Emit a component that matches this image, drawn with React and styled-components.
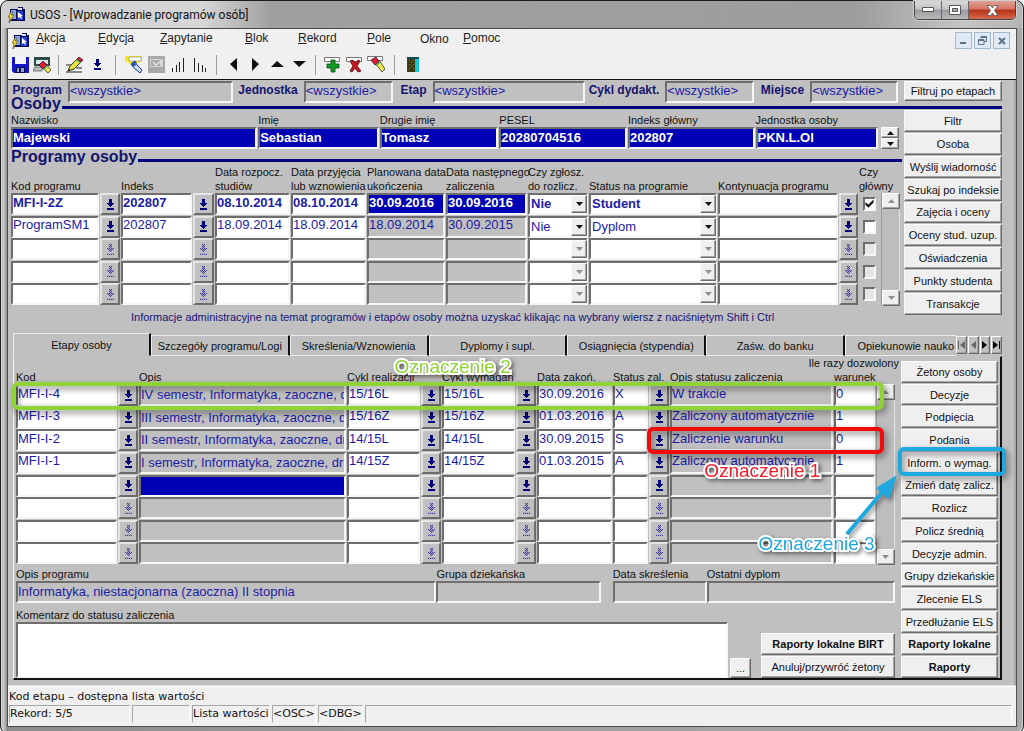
import React from "react";
import styled, { createGlobalStyle, css } from "styled-components";

const GlobalStyle = createGlobalStyle`
  * { box-sizing: border-box; }
  body {
    margin: 0;
    background: #fff;
    font-family: "Liberation Sans", Arial, sans-serif;
    font-size: 11px;
    color: #111;
  }
  button, input, select, textarea { font: inherit; color: inherit; border-radius: 0; }
  svg { display: block; flex: none; }
`;

const raised = css`
  border: 1px solid;
  border-color: #fbfbfb #6c6c6c #6c6c6c #fbfbfb;
  box-shadow: inset -1px -1px 0 #a4a4a4;
`;

const inset = css`
  border: 2px solid;
  border-color: #6e6e6e #f6f6f6 #f6f6f6 #6e6e6e;
`;

/* ---------- window frame ---------- */

const Window = styled.div`
  display: flex;
  flex-direction: column;
  min-height: 100vh;
  padding: 0 6px 6px;
  border: 1px solid #1c1c1c;
  border-radius: 8px;
  background: linear-gradient(to right, #8a8a8a 0, #d0d0d0 2px, #8d8d8d 6px, #9f9f9f 50%, #a8a8a8 100%);
  box-shadow: inset 1px 1px 0 #dcdcdc, inset -1px -1px 0 #d0d0d0;
`;

const TitleBar = styled.header`
  display: flex;
  align-items: center;
  height: 27px;
  margin: 0 -5px;
  padding: 0 6px 0 6px;
  gap: 5px;
  border-radius: 7px 7px 0 0;
  background: linear-gradient(to right, #cfcfcf 0, #d6d6d6 200px, #9f9f9f 270px, #9d9d9d 84%, #c4c4c4 94%, #b4b4b4 100%);
`;

const TitleText = styled.h1`
  flex: 1;
  margin: 0;
  font: 400 12px Roboto, "Open Sans", sans-serif;
`;

const Caption = styled.div`
  display: flex;
  align-self: flex-start;
  border: 1px solid #444;
  border-top: 0;
  border-radius: 0 0 5px 5px;
  overflow: hidden;
  box-shadow: 0 0 0 1px #cfcfcf;
`;

const CaptionButton = styled.button`
  display: flex;
  align-items: center;
  justify-content: center;
  width: ${(p) => (p.$close ? "46px" : "27px")};
  height: 18px;
  padding: 0;
  border: 0;
  border-right: ${(p) => (p.$close ? "0" : "1px solid #666")};
  background: ${(p) =>
    p.$close
      ? "linear-gradient(#e0a196 0, #d67462 45%, #b9301a 50%, #d56a4b 100%)"
      : "linear-gradient(#d8d8d8 0, #c4c4c6 45%, #9c9ca0 50%, #b9b9bc 100%)"};
`;

const Content = styled.div`
  flex: 1;
  display: flex;
  flex-direction: column;
  border: 1px solid #4c4c4c;
  background: #f0f0f0;
`;

const MenuBar = styled.nav`
  display: flex;
  align-items: center;
  height: 23px;
  padding: 0 6px 0 4px;
  font-size: 12px;
`;

const MenuItem = styled.a`
  width: ${(p) => p.$width}px;
  margin-bottom: ${(p) => (p.$plain ? 4 : 6)}px;
  color: #222;
  text-decoration: none;
  white-space: nowrap;
`;

const MenuIcon = styled.span`
  width: 24px;
`;

const ChildButtons = styled.div`
  display: flex;
  gap: 2px;
  margin-left: auto;
`;

const ChildButton = styled.button`
  display: flex;
  align-items: center;
  justify-content: center;
  width: 17px;
  height: 17px;
  padding: 0;
  border: 1px solid #a3b9cc;
  background: #dfeaf5;
`;

const Toolbar = styled.div`
  display: flex;
  align-items: center;
  height: 28px;
  padding: 0 1px 2px;
  border-bottom: 1px solid #111;
`;

const ToolButton = styled.button`
  display: flex;
  align-items: center;
  justify-content: center;
  width: 22px;
  height: 22px;
  padding: 0;
  border: 0;
  background: transparent;
`;

const Separator = styled.span`
  width: 1px;
  height: 20px;
  margin: 0 ${(p) => p.$gap || 5}px;
  background: #9a9a9a;
`;

/* ---------- form ---------- */

const Form = styled.main`
  flex: 1;
  padding: 1px 12px 5px 3px;
  background: #c0c0c0;
  border-right: 2px solid #a9a9a9;
  border-bottom: 1px solid #dedede;
`;

const FilterBar = styled.div`
  display: grid;
  grid-template-columns: 57fr 165fr 71fr 89fr 40fr 153fr 80fr 89fr 56fr 88fr 6fr 98fr;
  align-items: start;
`;

const FilterLabel = styled.label`
  padding: 2px 6px 0 0;
  font-size: 12px;
  font-weight: bold;
  line-height: 14px;
  text-align: right;
  white-space: nowrap;
  color: #14146e;
`;

const Field = styled.input`
  display: block;
  width: 100%;
  min-width: 0;
  height: 22px;
  padding: 0 0 ${(p) => (p.$center ? "1px" : "4px")};
  font-size: 13px;
  font-weight: ${(p) => (p.$bold ? "bold" : "normal")};
  ${inset}
  background: ${(p) => (p.$selected ? "#0000b4" : p.$gray ? "#c0c0c0" : "#fff")};
  color: ${(p) => (p.$selected ? "#fff" : "#1c1ca6")};
  outline: 0;
`;

const SideButton = styled.button`
  min-height: 20px;
  min-width: 0;
  padding: 0;
  font-size: 11px;
  font-weight: ${(p) => (p.$bold ? "bold" : "normal")};
  white-space: nowrap;
  background: #efefef;
  ${raised}
`;

const Heading = styled.h2`
  display: flex;
  align-items: flex-end;
  margin: ${(p) => (p.$tight ? "-8px 0 -3px" : "0")};
  font-size: 16px;
  line-height: ${(p) => (p.$tight ? "18px" : "16px")};
  color: #14146e;
  &::after {
    content: "";
    flex: 1;
    height: 3px;
    margin: 0 0 ${(p) => (p.$tight ? 4 : 3)}px 1px;
    background: #04047c;
  }
`;

const Columns = styled.div`
  display: grid;
  grid-template-columns: minmax(0, 892fr) minmax(0, 98fr);
  gap: 2px;
`;

const SideBar = styled.aside`
  display: grid;
  grid-auto-rows: 1fr;
  gap: 1px;
  align-self: start;
  height: ${(p) => p.$height}px;
  margin-top: ${(p) => p.$top || 0}px;
`;

const PersonRow = styled.div`
  display: grid;
  grid-template-columns: 247fr 121fr 119fr 128fr 127fr 123fr 21px;
  column-gap: 1px;
  align-items: end;
  padding: 3px 2px 0 0;
`;

const Labeled = styled.label`
  display: block;
  min-width: 0;
  line-height: 14px;
  white-space: nowrap;
`;

const Spinner = styled.div`
  display: flex;
  flex-direction: column;
  padding-left: 2px;
`;

const TinyButton = styled.button`
  display: flex;
  align-items: center;
  justify-content: center;
  width: ${(p) => p.$width || 18}px;
  height: ${(p) => p.$height || 16}px;
  padding: 0;
  background: ${(p) => (p.$gray ? "#c0c0c0" : "#efefef")};
  ${raised}
`;

const TableArea = styled.div`
  display: grid;
  grid-template-columns: minmax(0, 1fr) 19px;
  align-items: end;
  column-gap: 1px;
  padding-right: ${(p) => p.$right}px;
`;

const Table = styled.table`
  width: 100%;
  table-layout: fixed;
  border-collapse: collapse;
  height: ${(p) => p.$height}px;
  th {
    height: ${(p) => p.$head}px;
    padding: 0;
    font-weight: normal;
    line-height: 14px;
    text-align: left;
    vertical-align: bottom;
    white-space: pre;
  }
  td {
    height: 22px;
    padding: 0 1px 0 0;
    vertical-align: top;
  }
`;

const ScrollBar = styled.div`
  display: flex;
  flex-direction: column;
  justify-content: space-between;
  height: ${(p) => p.$height}px;
  border-left: 1px solid #999;
  border-right: 1px solid #e4e4e4;
  background: #bdbdbd;
`;

const PickButton = styled.button`
  display: flex;
  align-items: center;
  justify-content: center;
  width: 100%;
  height: 22px;
  padding: 0;
  border: 2px solid;
  border-color: #e4e4e4 #6c6c6c #6c6c6c #e4e4e4;
  background: #c0c0c0;
`;

const SelectBox = styled.div`
  display: grid;
  & > * { grid-area: 1 / 1; }
`;

const Select = styled.select`
  appearance: none;
  width: 100%;
  height: 22px;
  padding: 0 18px 1px 1px;
  font-size: 13px;
  font-weight: ${(p) => (p.$bold ? "bold" : "normal")};
  color: #1c1ca6;
  background: #fff;
  opacity: 1;
  ${inset}
`;

const SelectArrow = styled.span`
  display: flex;
  align-items: center;
  justify-content: center;
  justify-self: end;
  width: 16px;
  height: 18px;
  margin: 2px 1px 0 0;
  pointer-events: none;
  background: #efefef;
  ${raised}
`;

const Check = styled.input`
  appearance: none;
  display: block;
  width: 13px;
  height: 14px;
  margin: 4px 0 0 4px;
  ${inset}
  background: ${(p) => (p.disabled ? "#e6e6e6" : "#fff")};
  &:checked::after {
    content: "";
    display: block;
    width: 9px;
    height: 9px;
    background: #111;
    clip-path: polygon(5% 35%, 38% 62%, 95% 5%, 95% 38%, 38% 98%, 5% 68%);
  }
`;

const Info = styled.p`
  margin: 0;
  padding: 4px 8px 9px 0;
  font-size: 11px;
  line-height: 14px;
  text-align: center;
  color: #14147a;
`;

/* ---------- tabs ---------- */

const Tabs = styled.div`
  display: grid;
  grid-template-columns: 138fr repeat(5, 139fr) 111fr 46px;
  align-items: end;
  margin-left: 2px;
`;

const Tab = styled.button`
  height: ${(p) => (p.$active ? "23px" : "21px")};
  min-width: 0;
  padding: 0 2px;
  overflow: hidden;
  white-space: nowrap;
  text-align: ${(p) => (p.$cut ? "right" : "center")};
  background: #c0c0c0;
  border: 1px solid #ececec;
  border-right: ${(p) => (p.$cut ? "0" : "2px solid #111")};
  border-bottom-color: ${(p) => (p.$active ? "#c0c0c0" : "#ececec")};
`;

const TabNav = styled.div`
  display: flex;
  gap: 1px;
  padding-bottom: 2px;
`;

const Panel = styled.section`
  position: relative;
  margin-left: 2px;
  padding: 0 2px;
  border: 1px solid;
  border-color: #c0c0c0 #111 #111 #f4f4f4;
  border-right-width: 2px;
  border-bottom-width: 2px;
`;

const Note = styled.div`
  line-height: 13px;
  text-align: right;
`;

const Details = styled.div`
  display: grid;
  grid-template-columns: 420fr 164fr 12fr 94fr 188fr;
  padding: 2px 4px 0 0;
`;

const CommentRow = styled.div`
  display: grid;
  grid-template-columns: minmax(0, 1fr) 21px 142px;
  column-gap: 2px;
  align-items: end;
  padding: 5px 4px 0 0;
`;

const Comment = styled.textarea`
  display: block;
  width: 100%;
  height: 56px;
  resize: none;
  ${inset}
`;

const ReportButtons = styled.div`
  display: grid;
  grid-auto-rows: 22px;
  gap: 1px;
  margin-left: 8px;
`;

/* ---------- status bar ---------- */

const StatusBar = styled.footer`
  padding: 2px 4px 3px 1px;
  border-top: 1px solid #fff;
  font: 11px/16px "DejaVu Sans", "Open Sans", sans-serif;
  white-space: nowrap;
`;

const StatusCells = styled.div`
  display: flex;
  gap: 2px;
`;

const StatusCell = styled.span`
  flex: ${(p) => (p.$width ? `0 0 ${p.$width}px` : "1")};
  height: 18px;
  line-height: 16px;
  border: 1px solid;
  border-color: #a6a6a6 #fff #f0f0f0 #a6a6a6;
`;

/* ---------- annotations lying over the form ---------- */

const Frame = styled.div`
  position: absolute;
  pointer-events: none;
  border: 4px solid ${(p) => p.$color};
  border-radius: 6px;
  filter: drop-shadow(2px 3px 3px rgba(0, 0, 0, 0.5));
  top: ${(p) => p.$top}px;
  right: ${(p) => p.$right}px;
  left: ${(p) => p.$left};
  width: ${(p) => p.$width};
  height: ${(p) => p.$height}px;
`;

const Mark = styled.div`
  position: absolute;
  pointer-events: none;
  top: ${(p) => p.$top}px;
  left: ${(p) => p.$left};
  font-size: 19px;
  line-height: 22px;
  white-space: nowrap;
  color: ${(p) => p.$color};
  -webkit-text-stroke: 4px #fff;
  paint-order: stroke fill;
  filter: drop-shadow(2px 2px 2px rgba(0, 0, 0, 0.5));
`;

const Pointer = styled.svg`
  position: absolute;
  pointer-events: none;
  top: 117px;
  right: 100px;
  filter: drop-shadow(2px 3px 2px rgba(0, 0, 0, 0.4));
`;

/* ---------- drawings ---------- */

// rows of the "list of values" arrow: [x, y, width]
const ARROW = [[2, 0, 3], [2, 1, 3], [2, 2, 3], [2, 3, 3], [0, 4, 7], [1, 5, 5], [2, 6, 3], [3, 7, 1], [0, 9, 7], [0, 10, 7]];

const arrowPath = (dotted) =>
  ARROW.flatMap(([x, y, w]) => Array.from({ length: w }, (_, i) => [x + i, y]))
    .filter(([x, y]) => !dotted || ((x + y) % 2 === 0 && y !== 9))
    .map(([x, y]) => `M${x} ${y}h1v1h-1z`)
    .join("");

const DownArrow = ({ dotted }) => (
  <svg width="7" height="11" shapeRendering="crispEdges">
    {dotted && <path d={arrowPath(false)} fill="#aaaac8" />}
    <path d={arrowPath(dotted)} fill={dotted ? "#3c3c98" : "#000078"} />
  </svg>
);

const Triangle = ({ up, off }) => (
  <svg width="7" height="4">
    <path d={up ? "M0 4 3.500 0 7 4z" : "M0 0h7L3.500 4z"} fill={off ? "#8f8f8f" : "#111"} />
  </svg>
);

const AppIcon = () => (
  <svg width="17" height="16" viewBox="0 0 17 16">
    <path d="M2 2h8V0h5v2h2v12H2z" fill="#0a0a50" />
    <path d="M3 3h5v9H3z" fill="#86a8ea" />
    <path d="M9 4h6v9H9z" fill="#1c43d2" />
    <path d="M10 5v6l2-1 1 2 1-1-1-2h2z" fill="#fff" />
    <path d="M10 1h4v2h-4z" fill="#d9e4ff" />
    <path d="M3 5 0 10h2l-1 6 5-8H3l2-3z" fill="#ffe11a" stroke="#333" strokeWidth=".6" />
  </svg>
);

const SaveIcon = () => (
  <svg width="17" height="16" viewBox="0 0 17 16">
    <path d="M0 0h17v16H2l-2-2z" fill="#1414c8" />
    <path d="M3 0h11v7H3z" fill="#f3f3f8" />
    <path d="M4 10h9v6H4z" fill="#0a0a50" />
    <path d="M5 11h2v4H5zM9 11h3v4H9z" fill="#8ca0d8" />
  </svg>
);

const EditIcon = () => (
  <svg width="18" height="16" viewBox="0 0 18 16">
    <path d="M0 8h6M0 15h16M10 11h6" stroke="#222" strokeWidth="1" />
    <path d="m2 14 2-5 7-7 4 3-7 7z" fill="#e9e23c" stroke="#222" strokeWidth=".9" />
    <path d="m11 2 2-2 4 3-2 2z" fill="#d3243f" stroke="#402" strokeWidth=".7" />
    <path d="m10 3 1-1 4 3-1 1z" fill="#2d9e5a" />
    <path d="m2 14 1-2 1 1z" />
  </svg>
);

const ScreenIcon = () => (
  <svg width="18" height="16" viewBox="0 0 18 16">
    <path d="M1 0h16v9H1z" fill="#2e4a46" />
    <path d="M3 3h12v4H3z" fill="#dfe9e6" />
    <path d="m2 10-2 4h9v-4z" fill="#b8c2c0" stroke="#333" strokeWidth=".6" />
    <path d="m10 8 3-1 5 6-3 3-4-4z" fill="#ede94a" stroke="#333" strokeWidth=".8" />
    <path d="m6 8 4-4 4 4-4 4z" fill="#d8203c" stroke="#501" strokeWidth=".8" />
    <path d="m10 12 4-4 1 1-4 4z" fill="#3aa860" />
  </svg>
);

const Slot = () => <path d="M.5.5h15v4H.5z" fill="#fff" stroke="#777" />;

const QueryIcon = () => (
  <svg width="18" height="17" viewBox="0 0 18 17">
    <path d="M0 0h17v6H0z" fill="#f4ec2a" />
    <path d="M4 1h12v4H4z" fill="#fff" stroke="#777" strokeWidth=".6" />
    <path d="M2 6h12l-5 5z" fill="#f4ec2a" />
    <path d="m6 8 4-3 2 4 5 5-2 3-6-5z" fill="#c9dcff" stroke="#123a9a" strokeWidth="1" />
    <path d="m6 8 4-3 1 4-3 2z" fill="#2350bc" />
  </svg>
);

const ExecIcon = () => (
  <svg width="17" height="17" viewBox="0 0 17 17">
    <path d="M0 0h17v17H0z" fill="#a8a8a8" />
    <path d="M2.500 3.500h12v7h-12z" fill="none" stroke="#d6d6d6" />
    <path d="m5 6 3 3 5-4v5" fill="none" stroke="#e2e2e2" strokeWidth="1.500" />
  </svg>
);

const Bars = ({ down }) => (
  <svg width="12" height="14" shapeRendering="crispEdges">
    <path
      d={down ? "M.5 0v14M4.500 5v9M8.500 7v7M11.500 10v4" : "M.5 10v4M4.500 7v7M7.500 4v10M11.500 0v14"}
      stroke="#222"
    />
  </svg>
);

const Nav = ({ d }) => (
  <svg width="13" height="13" viewBox="0 0 13 13">
    <path d={d} fill="#111" />
  </svg>
);

const AddIcon = () => (
  <svg width="17" height="16" viewBox="0 0 17 16">
    <Slot />
    <path d="M7 3h4v4h4v4h-4v4H7v-4H3V7h4z" fill="#129a22" stroke="#064d10" strokeWidth=".8" />
  </svg>
);

const RemoveIcon = () => (
  <svg width="17" height="16" viewBox="0 0 17 16">
    <Slot />
    <path d="m4 4 3-1 2 3 3-3 2 1-3 5 4 5-3 1-3-4-3 4-2-1 3-5z" fill="#c8141e" stroke="#5c0408" strokeWidth=".8" />
  </svg>
);

const ClearIcon = () => (
  <svg width="18" height="17" viewBox="0 0 18 17">
    <Slot />
    <path d="m8 7 4-3 6 9-3 3z" fill="#ede94a" stroke="#333" strokeWidth=".8" />
    <path d="m4 4 5-3 3 5-4 3z" fill="#d8203c" stroke="#501" strokeWidth=".8" />
    <path d="m8 9 4-3 1 1-4 3z" fill="#3aa860" />
  </svg>
);

const DoorIcon = () => (
  <svg width="12" height="15" viewBox="0 0 12 15" shapeRendering="crispEdges">
    <path d="M0 0h12v15H0z" fill="#12c8d8" />
    <path d="M0 0h12v2H0zM0 0h2v15H0z" fill="#0d4c50" />
    <path d="M1 2h7v13H1z" fill="#3c3a10" />
    <path d="M2 3h1v1H2zM4 5h1v1H4zM6 3h1v1H6zM2 7h1v1H2zM6 7h1v1H6zM4 9h1v1H4zM2 11h1v1H2zM6 11h1v1H6z" fill="#8a8430" />
  </svg>
);

/* ---------- data ---------- */

const MENU = [
  ["Akcja", 62], ["Edycja", 62], ["Zapytanie", 85], ["Blok", 53], ["Rekord", 69],
  ["Pole", 53], ["Okno", 43, true], ["Pomoc", 50],
];

const FILTERS = ["Program", "Jednostka", "Etap", "Cykl dydakt.", "Miejsce"];

const PERSON = [
  ["Nazwisko", "Majewski"], ["Imię", "Sebastian"], ["Drugie imię", "Tomasz"],
  ["PESEL", "20280704516"], ["Indeks główny", "202807"], ["Jednostka osoby", "PKN.L.OI"],
];

const PERSON_BUTTONS = [
  "Filtr", "Osoba", "Wyślij wiadomość", "Szukaj po indeksie", "Zajęcia i oceny",
  "Oceny stud. uzup.", "Oświadczenia", "Punkty studenta", "Transakcje",
];

const STAGE_BUTTONS = [
  "Żetony osoby", "Decyzje", "Podpięcia", "Podania", "Inform. o wymag.", "Zmień datę zalicz.",
  "Rozlicz", "Policz średnią", "Decyzje admin.", "Grupy dziekańskie", "Zlecenie ELS",
  "Przedłużanie ELS", "Raporty lokalne", "Raporty",
];

const TABS = [
  "Etapy osoby", "Szczegóły programu/Logi", "Skreślenia/Wznowienia", "Dyplomy i supl.",
  "Osiągnięcia (stypendia)", "Zaśw. do banku", "Opiekunowie nauko",
];

const PROGRAM_COLS = [89, 21, 72, 22, 76, 76, 79, 82, 61, 129, 121, 20, 21];
const PROGRAM_HEADS = [
  "Kod programu", "", "Indeks", "", "Data rozpocz.\nstudiów", "Data przyjęcia\nlub wznowienia",
  "Planowana data\nukończenia", "Data następnego\nzaliczenia", "Czy zgłosz.\ndo rozlicz.",
  "Status na programie", "Kontynuacja programu", "", "Czy\ngłówny",
];

const EMPTY_PROGRAM = ["", "", "", "", "", "", "", ""];
const PROGRAMS = [
  ["MFI-I-2Z", "202807", "08.10.2014", "08.10.2014", "30.09.2016", "30.09.2016", "Nie", "Student"],
  ["ProgramSM1", "202807", "18.09.2014", "18.09.2014", "18.09.2014", "30.09.2015", "Nie", "Dyplom"],
  EMPTY_PROGRAM, EMPTY_PROGRAM, EMPTY_PROGRAM,
];

const STAGE_COLS = [102, 21, 208, 74, 21, 74, 21, 76, 36, 21, 164, 42];
const STAGE_HEADS = [
  "Kod", "", "Opis", "Cykl realizacji", "", "Cykl wymagań", "", "Data zakoń.", "Status zal.", "",
  "Opis statusu zaliczenia", "warunek",
];

const EMPTY_STAGE = ["", "", "", "", "", "", "", ""];
const STAGES = [
  ["MFI-I-4", "IV semestr, Informatyka, zaoczne, drugiego stopnia", "15/16L", "15/16L", "30.09.2016", "X", "W trakcie", "0"],
  ["MFI-I-3", "III semestr, Informatyka, zaoczne, drugiego stopnia", "15/16Z", "15/16Z", "01.03.2016", "A", "Zaliczony automatycznie", "1"],
  ["MFI-I-2", "II semestr, Informatyka, zaoczne, drugiego stopnia", "14/15L", "14/15L", "30.09.2015", "S", "Zaliczenie warunku", "0"],
  ["MFI-I-1", "I semestr, Informatyka, zaoczne, drugiego stopnia", "14/15Z", "14/15Z", "01.03.2015", "A", "Zaliczony automatycznie", "1"],
  EMPTY_STAGE, EMPTY_STAGE, EMPTY_STAGE, EMPTY_STAGE,
];

/* ---------- parts ---------- */

const Pick = ({ off }) => (
  <td>
    <PickButton disabled={off} aria-label="Lista wartości">
      <DownArrow dotted={off} />
    </PickButton>
  </td>
);

const Cell = ({ label, value, ...rest }) => (
  <td>
    <Field aria-label={label} defaultValue={value} {...rest} />
  </td>
);

const Choice = ({ label, value, bold, off }) => (
  <td>
    <SelectBox>
      <Select aria-label={label} disabled={off} $bold={bold}>
        <option>{value}</option>
      </Select>
      <SelectArrow>
        <Triangle off={off} />
      </SelectArrow>
    </SelectBox>
  </td>
);

const Head = ({ cols, heads }) => (
  <>
    <colgroup>
      {cols.map((w, i) => <col key={i} width={w} />)}
    </colgroup>
    <thead>
      <tr>
        {heads.map((h, i) => <th key={i} scope="col">{h}</th>)}
      </tr>
    </thead>
  </>
);

const Scroll = ({ height }) => (
  <ScrollBar $height={height}>
    <TinyButton aria-label="W górę"><Triangle up off /></TinyButton>
    <TinyButton aria-label="W dół"><Triangle off /></TinyButton>
  </ScrollBar>
);

const Programs = () => (
  <TableArea $right={2}>
    <Table $height={141} $head={28}>
      <Head cols={PROGRAM_COLS} heads={PROGRAM_HEADS} />
      <tbody>
        {PROGRAMS.map((r, i) => {
          const bold = i === 0;
          const off = i > 1;
          return (
            <tr key={i}>
              <Cell label="Kod programu" value={r[0]} $bold={bold} />
              <Pick off={off} />
              <Cell label="Indeks" value={r[1]} $bold={bold} />
              <Pick off={off} />
              <Cell label="Data rozpoczęcia studiów" value={r[2]} $bold={bold} />
              <Cell label="Data przyjęcia" value={r[3]} $bold={bold} />
              <Cell label="Planowana data ukończenia" value={r[4]} $bold={bold} $selected={bold} $gray />
              <Cell label="Data następnego zaliczenia" value={r[5]} $bold={bold} $selected={bold} $gray />
              <Choice label="Czy zgłoszony do rozliczenia" value={r[6]} bold={bold} off={off} />
              <Choice label="Status na programie" value={r[7]} bold={bold} off={off} />
              <Cell label="Kontynuacja programu" value="" />
              <Pick off={off} />
              <td><Check type="checkbox" aria-label="Czy główny" defaultChecked={bold} disabled={off} /></td>
            </tr>
          );
        })}
      </tbody>
    </Table>
    <Scroll height={113} />
  </TableArea>
);

const Stages = () => (
  <TableArea $right={4}>
    <Table $height={195} $head={14}>
      <Head cols={STAGE_COLS} heads={STAGE_HEADS} />
      <tbody>
        {STAGES.map((r, i) => {
          const off = i > 4;
          return (
            <tr key={i}>
              <Cell label="Kod" value={r[0]} />
              <Pick off={off} />
              <Cell label="Opis" value={r[1]} $gray $center $selected={i === 4} />
              <Cell label="Cykl realizacji" value={r[2]} />
              <Pick off={off} />
              <Cell label="Cykl wymagań" value={r[3]} />
              <Pick off={off} />
              <Cell label="Data zakończenia" value={r[4]} />
              <Cell label="Status zaliczenia" value={r[5]} />
              <Pick off={off} />
              <Cell label="Opis statusu zaliczenia" value={r[6]} $gray />
              <Cell label="Warunek" value={r[7]} />
            </tr>
          );
        })}
      </tbody>
    </Table>
    <Scroll height={181} />
  </TableArea>
);

const App = () => (
  <>
    <GlobalStyle />
    <Window>
      <TitleBar>
        <AppIcon />
        <TitleText>USOS - [Wprowadzanie programów osób]</TitleText>
        <Caption>
          <CaptionButton aria-label="Minimalizuj">
            <svg width="12" height="6"><path d="M.5.5h11v4H.5z" fill="#fff" stroke="#555" /></svg>
          </CaptionButton>
          <CaptionButton aria-label="Maksymalizuj">
            <svg width="12" height="10">
              <path d="M.5.5h11v9H.5z" fill="#fff" stroke="#555" />
              <path d="M3.500 3.500h5v3h-5z" fill="#aaa" stroke="#555" />
            </svg>
          </CaptionButton>
          <CaptionButton $close aria-label="Zamknij">
            <svg width="13" height="11" viewBox="0 0 13 11">
              <path d="M1 .5h3.500l2 2.500 2-2.500H12L8.500 5.500 12 10.500H8.500l-2-2.500-2 2.500H1L4.500 5.500z" fill="#fff" stroke="#555" strokeWidth=".8" />
            </svg>
          </CaptionButton>
        </Caption>
      </TitleBar>

      <Content>
        <MenuBar>
          <MenuIcon><AppIcon /></MenuIcon>
          {MENU.map(([name, width, plain]) => (
            <MenuItem key={name} href="#" $width={width} $plain={plain}>
              {plain ? name : <><u>{name[0]}</u>{name.slice(1)}</>}
            </MenuItem>
          ))}
          <ChildButtons>
            <ChildButton aria-label="Minimalizuj okno">
              <svg width="7" height="9"><path d="M0 6h6v2H0z" fill="#5d7285" /></svg>
            </ChildButton>
            <ChildButton aria-label="Przywróć okno">
              <svg width="9" height="9">
                <path d="M3 .500h5.500v5H6M3 .5v2M.5 3.500H6v5H.5zM.5 4.500H6M3 1.500h5" fill="none" stroke="#5d7285" />
              </svg>
            </ChildButton>
            <ChildButton aria-label="Zamknij okno">
              <svg width="8" height="8"><path d="m1 1 6 6M7 1 1 7" stroke="#5d7285" strokeWidth="2" /></svg>
            </ChildButton>
          </ChildButtons>
        </MenuBar>

        <Toolbar>
          <ToolButton aria-label="Zapisz"><SaveIcon /></ToolButton>
          <ToolButton aria-label="Wyczyść ekran"><ScreenIcon /></ToolButton>
          <Separator />
          <ToolButton aria-label="Edytuj"><EditIcon /></ToolButton>
          <ToolButton aria-label="Lista wartości"><DownArrow /></ToolButton>
          <Separator $gap={7} />
          <ToolButton aria-label="Wprowadź zapytanie"><QueryIcon /></ToolButton>
          <ToolButton aria-label="Wykonaj zapytanie" disabled><ExecIcon /></ToolButton>
          <ToolButton aria-label="Sortuj rosnąco"><Bars /></ToolButton>
          <ToolButton aria-label="Sortuj malejąco"><Bars down /></ToolButton>
          <Separator $gap={5} />
          <ToolButton aria-label="Poprzedni"><Nav d="M10 0v13L3 6z" /></ToolButton>
          <ToolButton aria-label="Następny"><Nav d="M3 0v13l7-7z" /></ToolButton>
          <ToolButton aria-label="W górę"><Nav d="M0 9h13L6 3z" /></ToolButton>
          <ToolButton aria-label="W dół"><Nav d="M0 3h13L6 9z" /></ToolButton>
          <Separator $gap={5} />
          <ToolButton aria-label="Dodaj rekord"><AddIcon /></ToolButton>
          <ToolButton aria-label="Usuń rekord"><RemoveIcon /></ToolButton>
          <ToolButton aria-label="Wyczyść rekord"><ClearIcon /></ToolButton>
          <Separator $gap={7} />
          <ToolButton aria-label="Wyjście"><DoorIcon /></ToolButton>
        </Toolbar>

        <Form>
          <FilterBar>
            {FILTERS.map((name) => (
              <React.Fragment key={name}>
                <FilterLabel htmlFor={name}>{name}</FilterLabel>
                <Field id={name} defaultValue="<wszystkie>" $gray />
              </React.Fragment>
            ))}
            <span />
            <SideButton>Filtruj po etapach</SideButton>
          </FilterBar>
          <Heading $tight>Osoby</Heading>

          <Columns>
            <div>
              <PersonRow>
                {PERSON.map(([name, value]) => (
                  <Labeled key={name}>
                    {name}
                    <Field defaultValue={value} $bold $selected $center />
                  </Labeled>
                ))}
                <Spinner>
                  <TinyButton $height={11} aria-label="Poprzednia osoba"><Triangle up /></TinyButton>
                  <TinyButton $height={11} aria-label="Następna osoba"><Triangle /></TinyButton>
                </Spinner>
              </PersonRow>
              <Heading>Programy osoby</Heading>
              <Programs />
              <Info>
                Informacje administracyjne na temat programów i etapów osoby można uzyskać klikając na wybrany wiersz z naciśniętym Shift i Ctrl
              </Info>
            </div>
            <SideBar $height={205}>
              {PERSON_BUTTONS.map((name) => <SideButton key={name}>{name}</SideButton>)}
            </SideBar>
          </Columns>

          <Tabs role="tablist">
            {TABS.map((name, i) => (
              <Tab key={name} role="tab" aria-selected={i === 0} $active={i === 0} $cut={i === 6}>{name}</Tab>
            ))}
            <TabNav>
              <TinyButton $gray $width={11} $height={18} aria-label="Pierwsza">
                <svg width="7" height="8"><path d="M0 0h1v8H0zM7 0v8L2 4z" fill="#666" /></svg>
              </TinyButton>
              <TinyButton $gray $width={11} $height={18} aria-label="Wstecz">
                <svg width="5" height="8"><path d="M5 0v8L0 4z" fill="#666" /></svg>
              </TinyButton>
              <TinyButton $gray $width={11} $height={18} aria-label="Dalej">
                <svg width="5" height="8"><path d="M0 0v8l5-4z" /></svg>
              </TinyButton>
              <TinyButton $gray $width={11} $height={18} aria-label="Ostatnia">
                <svg width="7" height="8"><path d="M6 0h1v8H6zM0 0v8l5-4z" /></svg>
              </TinyButton>
            </TabNav>
          </Tabs>

          <Panel>
            <Columns>
              <div>
                <Note>Ile razy dozwolony</Note>
                <Stages />
                <Details>
                  <Labeled>Opis programu<Field $gray $center defaultValue="Informatyka, niestacjonarna (zaoczna) II stopnia" /></Labeled>
                  <Labeled>Grupa dziekańska<Field $gray /></Labeled>
                  <span />
                  <Labeled>Data skreślenia<Field $gray /></Labeled>
                  <Labeled>Ostatni dyplom<Field $gray /></Labeled>
                </Details>
                <CommentRow>
                  <Labeled>Komentarz do statusu zaliczenia<Comment /></Labeled>
                  <SideButton aria-label="Rozwiń komentarz">...</SideButton>
                  <ReportButtons>
                    <SideButton $bold>Raporty lokalne BIRT</SideButton>
                    <SideButton>Anuluj/przywróć żetony</SideButton>
                  </ReportButtons>
                </CommentRow>
              </div>
              <SideBar $height={317} $top={4}>
                {STAGE_BUTTONS.map((name, i) => <SideButton key={name} $bold={i > 11}>{name}</SideButton>)}
              </SideBar>
            </Columns>

            <Frame $color="#8fd435" $top={25} $right={116} $left="-2px" $height={28} />
            <Frame $color="#f00a0a" $top={70} $right={116} $width="24%" $height={27} />
            <Frame $color="#1fa8e0" $top={90} $right={-6} $width="11%" $height={29} />
            <Pointer width="56" height="62">
              <path d="M3 60 40 16" stroke="#1fa8e0" strokeWidth="4" />
              <path d="M53 1 45 25 32 14z" fill="#1fa8e0" />
            </Pointer>
            <Mark $color="#8fd435" $top={-1} $left="38.600%">Oznaczenie 2</Mark>
            <Mark $color="#f51c2c" $top={103} $left="70%">Oznaczenie 1</Mark>
            <Mark $color="#1fa8e0" $top={176} $left="75.500%">Oznaczenie 3</Mark>
          </Panel>
        </Form>

        <StatusBar>
          <div>Kod etapu – dostępna lista wartości</div>
          <StatusCells>
            <StatusCell $width={121}>Rekord: 5/5</StatusCell>
            <StatusCell $width={58}> </StatusCell>
            <StatusCell $width={78}>Lista wartości</StatusCell>
            <StatusCell $width={44}>&lt;OSC&gt;</StatusCell>
            <StatusCell $width={44}>&lt;DBG&gt;</StatusCell>
            <StatusCell> </StatusCell>
          </StatusCells>
        </StatusBar>
      </Content>
    </Window>
  </>
);

export default App;
